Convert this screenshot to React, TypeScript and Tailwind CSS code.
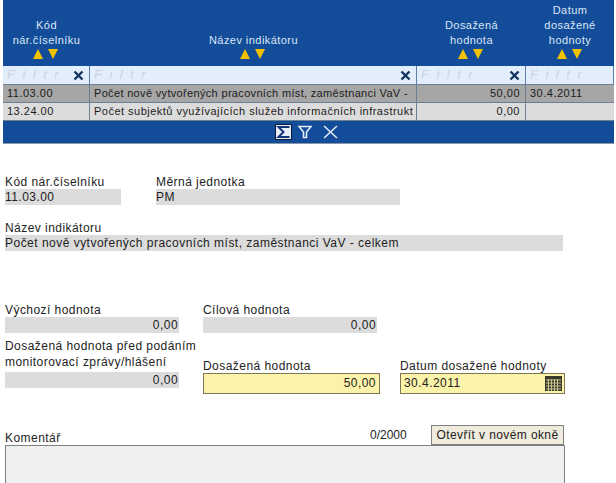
import React from 'react';

function SortArrows() {
  return (
    <div className="flex justify-center items-center gap-[5px] h-[12px] mr-[2px]">
      <svg width="10" height="10" viewBox="0 0 10 10"><path d="M5 0 L10 10 L0 10 Z" fill="#f2c200" /></svg>
      <svg width="10" height="10" viewBox="0 0 10 10"><path d="M0 0 L10 0 L5 10 Z" fill="#f2c200" /></svg>
    </div>
  );
}

function HeaderCell({ lines, className }: { lines: string[]; className: string }) {
  return (
    <div className={`flex flex-col justify-end items-center pb-[6px] text-[11px] tracking-[0.45px] text-[#dbe6f5] leading-[15px] ${className}`}>
      {lines.map((l) => (
        <div key={l}>{l}</div>
      ))}
      <SortArrows />
    </div>
  );
}

function ClearX() {
  return (
    <svg width="11" height="11" viewBox="0 0 11 11" className="shrink-0">
      <path d="M1.5 1.5 L9.5 9.5 M9.5 1.5 L1.5 9.5" stroke="#14355f" strokeWidth="2.4" />
    </svg>
  );
}

function FilterCell({ x, className }: { x?: boolean; className: string }) {
  return (
    <div className={`flex items-center justify-between pl-[4px] pr-[5px] bg-[#e3eefc] border-r border-[#5d7fa8] ${className}`}>
      <span className="italic text-[13px] text-[#ccd3df] tracking-[7.5px] whitespace-nowrap">Filtr</span>
      {x && <ClearX />}
    </div>
  );
}

function Row({ cells, bg, nameClass }: { cells: string[]; bg: string; nameClass: string }) {
  return (
    <div className={`flex h-[18px] border-b border-[#6f7f92] text-[11px] tracking-[0.5px] leading-[17px] text-[#1c1c1c] ${bg}`}>
      <div className="w-[87px] pl-[4px] border-r border-[#6f7f92]">{cells[0]}</div>
      <div className="w-[327px] pl-[4px] border-r border-[#6f7f92]">
        <div className={`overflow-hidden whitespace-nowrap ${nameClass}`}>{cells[1]}</div>
      </div>
      <div className="w-[109px] pr-[5px] text-right border-r border-[#6f7f92]">{cells[2]}</div>
      <div className="flex-1 pl-[4px]">{cells[3]}</div>
    </div>
  );
}

function ReadOnly({ value, className }: { value: string; className: string }) {
  return <div className={`h-[16px] bg-[#dcdcdc] leading-[17px] text-[#222] whitespace-nowrap ${className}`}>{value}</div>;
}

function Label({ children, className = '' }: { children: React.ReactNode; className?: string }) {
  return <div className={`h-[14px] leading-[14px] text-[#222] ${className}`}>{children}</div>;
}

export default function App() {
  return (
    <div className="w-[616px] h-[483px] overflow-hidden bg-white text-[12px] font-['Liberation_Sans',Arial,sans-serif] tracking-[0.45px]">
      <div className="ml-[3px] w-[611px] bg-[#134d9a]">
        <div className="flex h-[66px]">
          <HeaderCell lines={['Kód', 'nár.číselníku']} className="w-[87px]" />
          <HeaderCell lines={['Název indikátoru']} className="w-[327px]" />
          <HeaderCell lines={['Dosažená', 'hodnota']} className="w-[109px]" />
          <HeaderCell lines={['Datum', 'dosažené', 'hodnoty']} className="flex-1" />
        </div>
        <div className="flex h-[19px] border-b border-[#6f7f92]">
          <FilterCell x className="w-[87px]" />
          <FilterCell x className="w-[327px]" />
          <FilterCell x className="w-[109px]" />
          <FilterCell className="flex-1" />
        </div>
        <Row
          bg="bg-[#a6a6a6]"
          nameClass="w-[317px] tracking-[0.33px]"
          cells={['11.03.00', 'Počet nově vytvořených pracovních míst, zaměstnanci VaV - celkem', '50,00', '30.4.2011']}
        />
        <Row
          bg="bg-[#dcdcdc]"
          nameClass="w-[319px] tracking-[0.48px]"
          cells={['13.24.00', 'Počet subjektů využívajících služeb informačních infrastruktur', '0,00', '']}
        />
        <div className="flex items-center justify-center h-[23px] pr-[4px] border-b border-[#8a97a8]">
          <svg width="17" height="16" viewBox="0 0 17 16">
            <rect x="0.5" y="0.5" width="16" height="15" fill="#e8eef8" stroke="#0b1c3a" />
            <path d="M13.5 4 V3 H3.5 L8.5 8 L3.5 13 H13.5 V12" fill="none" stroke="#14357a" strokeWidth="2" />
          </svg>
          <svg width="14" height="14" viewBox="0 0 14 14" className="ml-[6px]">
            <path d="M1 1.5 H13 L8.5 7 V12.5 H5.5 V7 Z" fill="none" stroke="#e3ecf8" strokeWidth="1.6" />
          </svg>
          <svg width="15" height="14" viewBox="0 0 15 14" className="ml-[11px]">
            <path d="M1 1 L14 13 M14 1 L1 13" stroke="#e3ecf8" strokeWidth="1.5" />
          </svg>
        </div>
      </div>

      <div className="pl-[5px]">
        <div className="flex mt-[31px]">
          <div className="w-[151px]">
            <Label>Kód nár.číselníku</Label>
            <ReadOnly value="11.03.00" className="w-[116px]" />
          </div>
          <div>
            <Label>Měrná jednotka</Label>
            <ReadOnly value="PM" className="w-[244px]" />
          </div>
        </div>

        <Label className="mt-[16px]">Název indikátoru</Label>
        <ReadOnly value="Počet nově vytvořených pracovních míst, zaměstnanci VaV - celkem" className="w-[558px] tracking-[0.48px]" />

        <div className="flex mt-[52px]">
          <div className="w-[198px]">
            <Label>Výchozí hodnota</Label>
            <ReadOnly value="0,00" className="w-[174px] pr-[1px] text-right" />
            <div className="mt-[5px] leading-[16px] text-[#222] whitespace-nowrap">Dosažená hodnota před podáním</div>
            <div className="leading-[16px] text-[#222] whitespace-nowrap">monitorovací zprávy/hlášení</div>
            <ReadOnly value="0,00" className="mt-[2px] w-[174px] pr-[1px] text-right" />
          </div>
          <div className="w-[197px]">
            <Label>Cílová hodnota</Label>
            <ReadOnly value="0,00" className="w-[174px] pr-[1px] text-right" />
            <Label className="mt-[26px]">Dosažená hodnota</Label>
            <div className="w-[177px] h-[21px] bg-[#fbf3a9] border border-[#7d7755] text-right pr-[3px] leading-[19px] text-[#222]">50,00</div>
          </div>
          <div className="pt-[56px]">
            <Label>Datum dosažené hodnoty</Label>
            <div className="flex items-center justify-between w-[165px] h-[21px] bg-[#fbf3a9] border border-[#7d7755] pl-[3px] pr-[2px] leading-[19px] text-[#222]">
              <span>30.4.2011</span>
              <svg width="17" height="15" viewBox="0 0 17 15">
                <rect width="17" height="15" fill="#3a3a2c" />
                <path d="M1 4 H16 M1 7 H16 M1 10 H16 M1 13 H16 M3.5 3 V15 M6.5 3 V15 M9.5 3 V15 M12.5 3 V15" stroke="#c9c48e" strokeWidth="1" />
              </svg>
            </div>
          </div>
        </div>

        <div className="flex items-end w-[560px] mt-[30px] h-[21px]">
          <Label className="w-[365px]">Komentář</Label>
          <div className="w-[61px] h-[20px] leading-[20px] tracking-[0px] text-[#222]">0/2000</div>
          <button className="w-[133px] h-[20px] bg-[#efebdd] border border-[#808080] leading-[17px] tracking-[0.4px] text-[#222] whitespace-nowrap">Otevřít v novém okně</button>
        </div>
        <div className="w-[560px] h-[60px] bg-[#efefef] border border-[#808080]" />
      </div>
    </div>
  );
}
